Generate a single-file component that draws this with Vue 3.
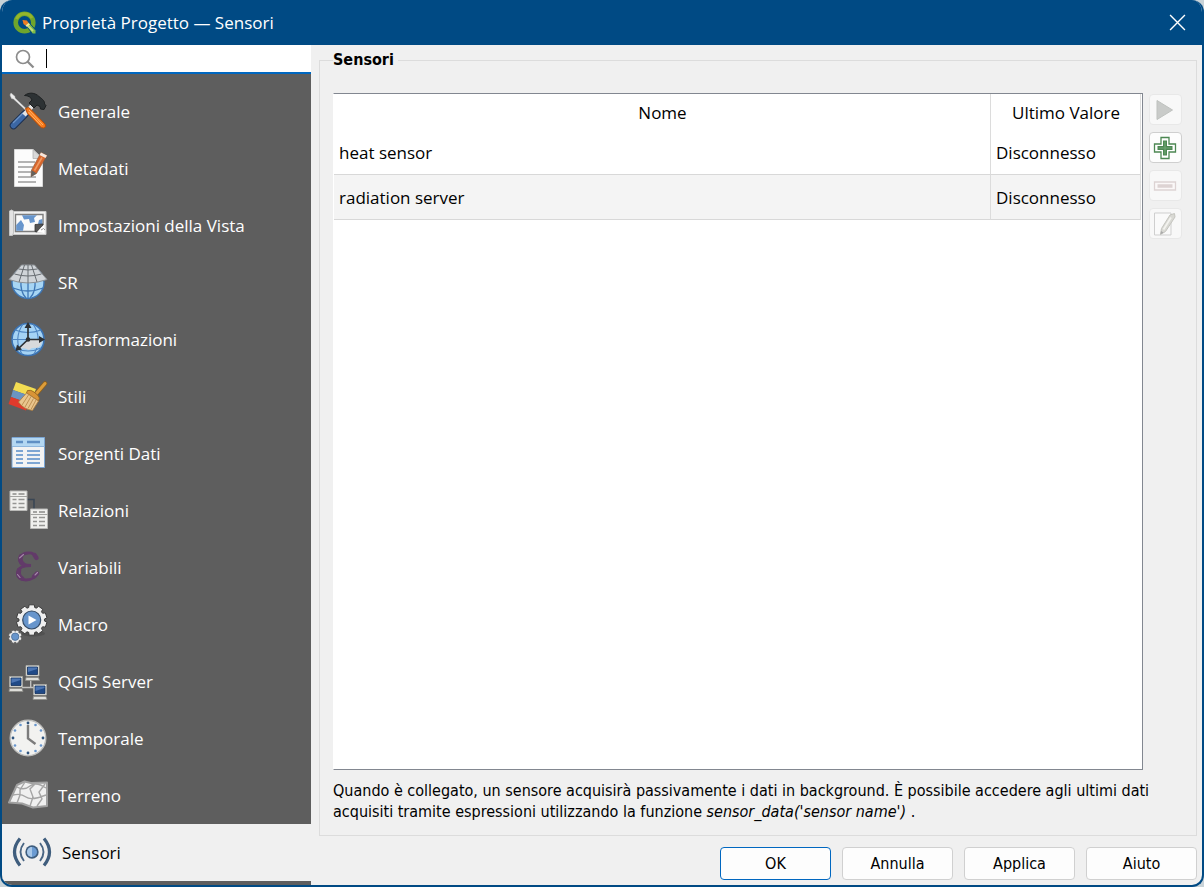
<script setup>
import { ref, onMounted } from 'vue'

const sections = [
  { id: 'general', label: 'Generale' },
  { id: 'metadata', label: 'Metadati' },
  { id: 'view', label: 'Impostazioni della Vista' },
  { id: 'crs', label: 'SR' },
  { id: 'transform', label: 'Trasformazioni' },
  { id: 'styles', label: 'Stili' },
  { id: 'sources', label: 'Sorgenti Dati' },
  { id: 'relations', label: 'Relazioni' },
  { id: 'variables', label: 'Variabili' },
  { id: 'macro', label: 'Macro' },
  { id: 'server', label: 'QGIS Server' },
  { id: 'temporal', label: 'Temporale' },
  { id: 'terrain', label: 'Terreno' },
  { id: 'sensors', label: 'Sensori' },
]
const current = ref('sensors')
const filter = ref('')
const filterBox = ref(null)

const sensors = [
  { name: 'heat sensor', value: 'Disconnesso' },
  { name: 'radiation server', value: 'Disconnesso' },
]

function gear(cx, cy, outer, inner, teeth) {
  const pts = []
  const step = (Math.PI * 2) / teeth
  for (let i = 0; i < teeth; i++) {
    const a = i * step + step / 2
    for (const [k, r] of [[-0.38, inner], [-0.27, outer], [0.27, outer], [0.38, inner]]) {
      pts.push(`${(cx + Math.cos(a + k * step) * r).toFixed(2)},${(cy + Math.sin(a + k * step) * r).toFixed(2)}`)
    }
  }
  return pts.join(' ')
}
const bigGear = gear(23.7, 16, 15.4, 12.8, 10)
const smallGear = gear(7.2, 32.7, 6.8, 5.6, 8)

const clockDots = Array.from({ length: 12 }, (_, i) => ({
  x: 20 + Math.sin((i * Math.PI) / 6) * 15,
  y: 20 - Math.cos((i * Math.PI) / 6) * 15,
  main: i % 3 === 0,
}))

onMounted(() => filterBox.value?.focus())
</script>

<template>
  <div class="window">
    <header class="titlebar">
      <svg class="logo" viewBox="0 0 24 24" aria-hidden="true">
        <circle cx="11.500" cy="11.500" r="8.800" fill="none" stroke="#6fa52c" stroke-width="4.600" />
        <path d="M3.500 8A8.800 8.800 0 0 1 19 7" fill="none" stroke="#96b52c" stroke-width="3" />
        <path d="M12.500 13.500L15.500 11L23 19.500V23H19.500Z" fill="#7dbb4a" stroke="#004a84" stroke-width="1" />
        <path d="M15 15L20 20" stroke="#c5dd7a" stroke-width="2" />
        <path d="M9.500 9L14 9.500L15.500 12L12.500 14.500L10.500 13Z" fill="#ee7c22" />
        <path d="M12.500 14.500L15.500 12L17 13.500L14 16Z" fill="#f4e39a" />
      </svg>
      <h1>Proprietà Progetto — Sensori</h1>
      <button class="close" type="button" aria-label="Chiudi">
        <svg viewBox="0 0 16 16" aria-hidden="true"><path d="M1 1L15 15M15 1L1 15" fill="none" stroke="#fff" stroke-width="1.300" /></svg>
      </button>
    </header>

    <div class="body">
      <aside class="sidebar">
        <label class="search">
          <svg viewBox="0 0 20 20" aria-hidden="true">
            <circle cx="8" cy="8" r="6.500" fill="none" stroke="#8c8c8c" stroke-width="1.700" />
            <path d="M12.500 12.500L18.500 18.500" stroke="#8c8c8c" stroke-width="2.300" />
          </svg>
          <span class="caret"></span>
          <input ref="filterBox" v-model="filter" type="text" aria-label="Cerca" />
        </label>

        <nav class="sections">
          <button
            v-for="s in sections"
            :key="s.id"
            type="button"
            class="section"
            :class="{ active: s.id === current }"
            @click="current = s.id"
          >
            <svg class="icon" viewBox="0 0 40 41" aria-hidden="true">
              <g v-if="s.id === 'general'">
                <path d="M5.500 34.500L17 23" stroke="#1c3050" stroke-width="7.500" stroke-linecap="round" />
                <path d="M5.500 34.500L17 23" stroke="#3c67a4" stroke-width="5.500" stroke-linecap="round" />
                <path d="M5 32L15 22" stroke="#6d94c8" stroke-width="1.200" />
                <path d="M16 24L25 14" stroke="#e4e4e4" stroke-width="4.500" />
                <path d="M16.500 4.500C21 1 27 1.500 31 5.500C35 8.500 37 10.500 36.500 13L38 14.500L36 18.500L32.500 18L32 15.500L29 14L26 17L21 12L24 9C23 6 20 4.500 16.500 4.500Z" fill="#2d3234" stroke="#1d2021" />
                <path d="M3 2L7 5.500V7L19.500 19L18.500 20L5.500 8L3.500 7.500L2 4Z" fill="#ececec" stroke="#c2c2c2" stroke-width=".5" />
                <path d="M17.500 17.500L20.500 16.500L23.500 19L37 33Q39 36 35.500 37Q33.500 37.500 31.500 35L19.500 22.500Z" fill="#f7791a" stroke="#b64c08" />
                <path d="M21 19L35 34M20.500 21L33 34.500" stroke="#ffb46c" stroke-width="1" />
              </g>
              <g v-else-if="s.id === 'metadata'">
                <path d="M6.500 1.500H25L34.500 10.500V38.500H6.500Z" fill="#fcfcfc" stroke="#d8d8d8" />
                <path d="M25 1.500V10.500H34.500Z" fill="#d9d9d9" stroke="#aaa" stroke-width=".7" />
                <path d="M10 14H27M10 19H25M10 24H23M10 29H28M10 34H28" stroke="#9b9b9b" stroke-width="1.400" />
                <path d="M33 4.500L39 7.500L28.500 25.500L23 28.500L23.500 22Z" fill="#d8662c" stroke="#8a5a3c" stroke-width=".6" />
                <path d="M33 4.500L39 7.500L37.500 10L31.500 7Z" fill="#f3e6de" />
                <path d="M23.500 22L28.500 25.500L23 29Z" fill="#66625e" />
                <path d="M34 9.500L26.500 22.500" stroke="#f09a62" stroke-width="1.600" />
              </g>
              <g v-else-if="s.id === 'view'">
                <path d="M4.500 6.500H38V29.500H4.500Z" fill="#f0f0f0" stroke="#c9c9c9" />
                <path d="M1.500 6Q3.500 4 5.500 6V28L4.500 30.500H1.500Z" fill="#e3e3e3" stroke="#c4c4c4" />
                <path d="M7.500 9.500H35V26.500H7.500Z" fill="#fafafa" stroke="#7d7d7d" stroke-width="1.400" />
                <path d="M14 10.200H29L26 13L27 17L22 18L21 14L16 14.500ZM8.200 20L13 15L16 20L15 25.800H8.200ZM34.300 14V22L30 19L31 15Z" fill="#6795cc" />
                <path d="M27 26.500V19.500L35 19V20L29 27Z" fill="#545454" stroke="#333" stroke-width=".8" />
                <path d="M29 27L36 19.500V28Z" fill="#fff" />
                <path d="M33 25Q36 22 37 25" fill="none" stroke="#999" />
              </g>
              <g v-else-if="s.id === 'crs'">
                <circle cx="20" cy="20.500" r="16" fill="#a7d5f4" stroke="#3e76b4" stroke-width="1.400" />
                <path d="M20 17V36.500M13 18Q12 30 18 36M27 18Q28 30 22 36M5 26Q20 32 35 26" fill="none" stroke="#3e76b4" stroke-width="1.300" />
                <path d="M13.500 3H26.500L39 17.500Q20 24.500 1 17.500Z" fill="#d0d4d8" stroke="#8c9196" />
                <path d="M20 3V21M16.500 3L11 20M23.500 3L29 20M10.500 7Q20 9 29.500 7M6.500 12Q20 16 33.500 12" fill="none" stroke="#676c71" stroke-width="1" />
              </g>
              <g v-else-if="s.id === 'transform'">
                <circle cx="20" cy="20.500" r="16" fill="#a5d3f5" stroke="#3a72b2" stroke-width="1.600" />
                <path d="M4 20.500H36M7 11Q20 16 33 11M7 29Q20 35 33 29M15 5Q5 20 14 35M25 5Q35 20 26 35" fill="none" stroke="#4f86c2" stroke-width="1.100" />
                <path d="M11 30L20 20.500H34Q34 27 29 29Q24 28 21 31Q16 28 11 30Z" fill="#d8dadc" />
                <path d="M20 20.500V7M20 20.500H33M20 20.500L10.500 29.500" stroke="#2d3033" stroke-width="1.700" />
                <path d="M20 3L23.500 9H16.500ZM37 20.500L31 17V24ZM7.500 32L9 25.500L14 30.500Z" fill="#2d3033" />
                <circle cx="20" cy="20.500" r="2.300" fill="#2d3033" />
              </g>
              <g v-else-if="s.id === 'styles'">
                <path d="M8 6L28 13L25 21L5 14Z" fill="#f2dc52" />
                <path d="M5 14L25 21L22 28L3 21Z" fill="#6b94c2" />
                <path d="M3 21L21 27L18 34.500L.5 28Z" fill="#e03a2c" />
                <path d="M28 18L37 7.500" stroke="#8d5f1b" stroke-width="4.500" stroke-linecap="round" />
                <path d="M28 18L37 7.500" stroke="#dd9d3a" stroke-width="3" stroke-linecap="round" />
                <path d="M19.500 14.500Q23 13.500 26 16L30 19.500Q32.500 22 30.500 25L18.500 17Z" fill="#d99436" stroke="#8d5f1b" stroke-width=".8" />
                <path d="M18.500 17L30.500 25L24.500 34.500Q15 33 10.500 26Z" fill="#e9c58d" stroke="#a8793b" stroke-width=".8" />
                <path d="M20.500 19L14 29M23 20.500L17 31M25.500 22.500L20 32.500M28 24L23 33.500" stroke="#b98a4c" stroke-width=".9" />
              </g>
              <g v-else-if="s.id === 'sources'">
                <path d="M4 4.500H36.500V34.500H4Z" fill="#f3f3f3" stroke="#7aa5d4" />
                <path d="M4.500 5H36V13H4.500Z" fill="#b3d7f2" />
                <path d="M4 13.500H36.500" stroke="#8fb7de" />
                <path d="M8 9H15M19 9H32" stroke="#5f8fc4" stroke-width="2.400" />
                <path d="M8 18H15M19 18H32M8 22H15M19 22H32M8 26H15M19 26H32M8 30H15M19 30H32" stroke="#7ea6d3" stroke-width="1.800" />
              </g>
              <g v-else-if="s.id === 'relations'">
                <path d="M18 9.500H26V19" fill="none" stroke="#3a4654" stroke-width="1.600" />
                <g v-for="(t, i) in [[2, 1], [22.500, 19]]" :key="i" :transform="`translate(${t[0]} ${t[1]})`">
                  <path d="M0 0H17V19.500H0Z" fill="#f0f0ee" stroke="#b9b9b7" />
                  <path d="M0 5.500H17" stroke="#a3a3a1" />
                  <path d="M2.500 3H6.500M8.500 3H14.500" stroke="#8b8b89" stroke-width="1.300" />
                  <path d="M2.500 8.500H6.500M8.500 8.500H14.500M2.500 12.500H6.500M8.500 12.500H14.500M2.500 16.500H6.500M8.500 16.500H14.500" stroke="#959593" stroke-width="1.500" />
                </g>
              </g>
              <g v-else-if="s.id === 'variables'" fill="none" stroke-linecap="round">
                <path d="M28 10.500Q26 5.500 20 6C13 6.500 11 11 12 14Q13.500 18 23 18.500Q11 18.500 9.500 25Q8.500 32.500 18 33Q26 33 29 26.500" stroke="#623a69" stroke-width="2.800" />
                <path d="M13 9.500Q11 14 15 17M11 23Q9.500 29 14 31.500" stroke="#623a69" stroke-width="4.600" />
                <path d="M26.500 8L28.500 11M26 29.500L29 26.500" stroke="#623a69" stroke-width="4.400" />
                <path d="M11.500 11L15.500 7.500M9.500 27.500L12 30.500M27 28L29.500 25.500" stroke="#a587aa" stroke-width="1.100" />
              </g>
              <g v-else-if="s.id === 'macro'">
                <ellipse cx="25" cy="29.500" rx="12" ry="3" fill="#444" opacity=".5" />
                <polygon :points="bigGear" fill="#efefef" stroke="#3b3b3b" stroke-linejoin="round" />
                <circle cx="23.700" cy="16" r="9" fill="#6795cc" stroke="#344b66" stroke-width="1.200" />
                <path d="M20.500 11.500L28.500 16L20.500 20.500Z" fill="#fff" />
                <polygon :points="smallGear" fill="#ececec" stroke="#555" stroke-width=".7" />
                <circle cx="7.200" cy="32.700" r="3.700" fill="#6795cc" stroke="#496a92" stroke-width=".8" />
              </g>
              <g v-else-if="s.id === 'server'">
                <path d="M22.700 19V26.500M14 26.500H26" fill="none" stroke="#c2c2c0" stroke-width="1.400" />
                <g v-for="(t, i) in [[1, 15], [17.500, 4], [25, 23]]" :key="i" :transform="`translate(${t[0]} ${t[1]})`">
                  <path d="M.5.500H13.500V11H.5Z" fill="#e7e7e2" stroke="#aaa9a3" stroke-width=".8" />
                  <path d="M2 2H12V9.500H2Z" fill="#204a87" stroke="#13305b" stroke-width=".8" />
                  <path d="M2.500 2.500H11.500V4L2.500 7Z" fill="#4d76b3" />
                  <path d="M.5 12.500H13L14 15.500H0Z" fill="#dededa" stroke="#8d8d88" stroke-width=".8" />
                </g>
              </g>
              <g v-else-if="s.id === 'temporal'">
                <circle cx="20" cy="20" r="17.800" fill="#f2f2f0" stroke="#bdbdbb" stroke-width="1.400" />
                <circle
                  v-for="(d, i) in clockDots"
                  :key="i"
                  :cx="d.x"
                  :cy="d.y"
                  :r="d.main ? 1.400 : 1.300"
                  :fill="d.main ? '#2f557f' : '#6795cc'"
                />
                <path d="M20 7V20.500L27.500 26" fill="none" stroke="#7c7c7c" stroke-width="2.400" />
              </g>
              <g v-else-if="s.id === 'terrain'">
                <path d="M1 27.500L9 10L16.500 6.500L23 8L39 7.500V31L25 32.500L14 28.500Z" fill="#f0f0f0" stroke="#a0a0a0" stroke-width="2" stroke-linejoin="round" />
                <path d="M9 12Q16 16 22 11T38 13M5 20Q13 18 18 22T38 20M17 7L12 15L12 20L9 28M28 8L22 14L25 22L22 31M37 9L31 17L34 24L29 31" fill="none" stroke="#a5a5a5" stroke-width="1.400" />
              </g>
              <g v-else>
                <circle cx="20" cy="20" r="6.700" fill="#3f5d7d" />
                <circle cx="20" cy="20" r="5" fill="#6b9bd2" />
                <path d="M20 15A5 5 0 0 0 20 25Z" fill="#a9c8e8" />
                <path d="M12 11Q5 20 12 29M28 11Q35 20 28 29" fill="none" stroke="#4a6684" stroke-width="1.900" />
                <path d="M8 6.500Q-3 20 8 33.500M32 6.500Q43 20 32 33.500" fill="none" stroke="#3f5d7d" stroke-width="3.200" />
              </g>
            </svg>
            <span>{{ s.label }}</span>
          </button>
        </nav>
      </aside>

      <main class="content">
        <fieldset class="group">
          <legend>Sensori</legend>
          <div class="panel">
            <div class="grid">
              <table>
                <colgroup>
                  <col />
                  <col class="col-value" />
                </colgroup>
                <thead>
                  <tr><th scope="col">Nome</th><th scope="col">Ultimo Valore</th></tr>
                </thead>
                <tbody>
                  <tr v-for="r in sensors" :key="r.name"><td>{{ r.name }}</td><td>{{ r.value }}</td></tr>
                </tbody>
              </table>
            </div>
            <div class="tools">
              <button type="button" disabled aria-label="Avvia">
                <svg viewBox="0 0 24 24" aria-hidden="true"><path d="M4 2.500L19.500 12L4 21.500Z" fill="#c9cbc9" stroke="#bfc2bf" /></svg>
              </button>
              <button type="button" aria-label="Aggiungi sensore">
                <svg viewBox="0 0 24 24" aria-hidden="true">
                  <path d="M8 1.500H16V8H22.500V16H16V22.500H8V16H1.500V8H8Z" fill="#fff" stroke="#4c8752" stroke-width="1.300" />
                  <path d="M12 4.500V19.500M4.500 12H19.500" stroke="#4c8752" stroke-width="4" />
                  <path d="M12 5.500V18.500M5.500 12H18.500" stroke="#6fa574" stroke-width="1.200" />
                </svg>
              </button>
              <button type="button" disabled aria-label="Rimuovi sensore">
                <svg viewBox="0 0 24 24" aria-hidden="true">
                  <path d="M1.500 8H22.500V16H1.500Z" fill="#fbf8f8" stroke="#ddd3d3" stroke-width="1.300" />
                  <path d="M4.500 12H19.500" stroke="#ddd3d3" stroke-width="3.500" />
                </svg>
              </button>
              <button type="button" disabled aria-label="Modifica sensore">
                <svg viewBox="0 0 24 24" aria-hidden="true">
                  <path d="M1.500 1H18V23H1.500Z" fill="#fafafa" stroke="#cfcfcf" />
                  <path d="M17 3L21.500 1.500L22 5L12.500 19.500L7.500 22.500L8.500 16.500Z" fill="#d9d9d4" stroke="#c4c4be" />
                  <path d="M18 5.500L10.500 17.500" stroke="#f3f3ef" stroke-width="1.800" />
                  <path d="M7.500 22.500L8 19L10.500 20.500Z" fill="#aaa" />
                </svg>
              </button>
            </div>
          </div>
          <p class="hint">
            Quando è collegato, un sensore acquisirà passivamente i dati in background. È possibile accedere agli ultimi dati acquisiti tramite espressioni utilizzando la funzione <em>sensor_data('sensor name')</em> .
          </p>
        </fieldset>
        <footer class="actions">
          <button type="button" class="default">OK</button>
          <button type="button">Annulla</button>
          <button type="button">Applica</button>
          <button type="button">Aiuto</button>
        </footer>
      </main>
    </div>
  </div>
</template>

<style>
body {
  background: #c9d3d8;
}
</style>

<style scoped>
* {
  box-sizing: border-box;
}
.window {
  display: flex;
  flex-direction: column;
  min-height: 100vh;
  border: 2px solid #004a84;
  border-top: 0;
  border-radius: 12px;
  overflow: hidden;
  background: #f0f0f0;
  color: #000;
  font-family: "Open Sans", "Noto Sans", sans-serif;
  font-size: 17px;
}
button,
input {
  font: inherit;
  color: inherit;
}
.titlebar {
  display: flex;
  align-items: center;
  height: 45px;
  padding: 0 16px 0 11px;
  background: #004a84;
  color: #fff;
}
.logo {
  width: 24px;
  height: 24px;
  margin-right: 5px;
}
h1 {
  flex: 1;
  margin: 0;
  font-size: 17px;
  font-weight: 400;
}
.close {
  display: flex;
  padding: 0;
  border: 0;
  background: none;
}
.close svg {
  width: 17px;
  height: 17px;
}
.body {
  display: flex;
  flex: 1;
}
.sidebar {
  display: flex;
  flex-direction: column;
  flex: 0 0 309px;
  background: #5e5e5e;
}
.search {
  display: flex;
  align-items: center;
  height: 29px;
  padding-left: 13px;
  background: #fff;
  border-bottom: 2px solid #0067c0;
}
.search svg {
  width: 20px;
  height: 20px;
}
.caret {
  width: 1px;
  height: 19px;
  margin-left: 11px;
  background: #000;
}
.search input {
  flex: 1;
  min-width: 0;
  height: 20px;
  padding: 0;
  border: 0;
  outline: 0;
  background: none;
  caret-color: transparent;
}
.sections {
  display: flex;
  flex-direction: column;
  padding: 9px 0 4px;
}
.section {
  display: flex;
  align-items: center;
  gap: 10px;
  height: 57px;
  padding: 0 6px;
  border: 0;
  background: none;
  color: #fff;
  text-align: left;
}
.section.active {
  padding-left: 10px;
  background: #f0f0f0;
  color: #000;
}
.icon {
  width: 40px;
  height: 41px;
}
.content {
  display: flex;
  flex: 1;
  flex-direction: column;
  min-width: 0;
  padding: 3px 5px 5px 8px;
}
.group {
  display: flex;
  flex: 1;
  flex-direction: column;
  min-width: 0;
  margin: 0;
  padding: 21px 14px 13px 13px;
  border: 1px solid #dcdcdc;
}
legend {
  padding: 0 4px 0 0;
  font-family: "DejaVu Sans Condensed", "DejaVu Sans", sans-serif;
  font-size: 16px;
  font-weight: 700;
  line-height: 24px;
}
.panel {
  display: flex;
  flex: 1;
  gap: 6px;
}
.grid {
  flex: 1;
  min-width: 0;
  padding-right: 1px;
  background: #fff;
  border: 1px solid #828790;
  border-left-color: #fff;
}
table {
  width: 100%;
  table-layout: fixed;
  border-collapse: separate;
  border-spacing: 0;
}
.col-value {
  width: 151px;
}
th {
  height: 36px;
  padding: 0 0 0 1px;
  font-weight: 400;
}
th + th,
td + td {
  border-left: 1px solid #dcdcdc;
  border-right: 1px solid #dcdcdc;
}
td {
  height: 45px;
  padding: 0 5px;
  border-bottom: 1px solid #d8d8d8;
}
tbody tr:nth-child(even) {
  background: #f4f4f4;
}
.tools {
  display: flex;
  flex-direction: column;
  gap: 7px;
  padding-top: 1px;
}
.tools button {
  display: flex;
  align-items: center;
  justify-content: center;
  width: 33px;
  height: 31px;
  padding: 0 2px 0 0;
  border: 1px solid #cfcfcf;
  border-radius: 4px;
  background: #fdfdfd;
}
.tools button:disabled {
  border-color: #e8e8e8;
  background: #f8f8f8;
}
.tools svg {
  width: 24px;
  height: 24px;
}
.hint {
  margin: 10px 0 0;
  font-family: "DejaVu Sans Condensed", "DejaVu Sans", sans-serif;
  font-size: 16px;
  line-height: 21px;
}
.actions {
  display: flex;
  justify-content: flex-end;
  gap: 11px;
  padding-top: 11px;
}
.actions button {
  width: 111px;
  height: 33px;
  padding: 0;
  border: 1px solid #d0d0d0;
  border-radius: 4px;
  background: #fdfdfd;
  font-family: "DejaVu Sans Condensed", "DejaVu Sans", sans-serif;
  font-size: 16px;
}
.actions .default {
  border-color: #0067c0;
}
</style>
